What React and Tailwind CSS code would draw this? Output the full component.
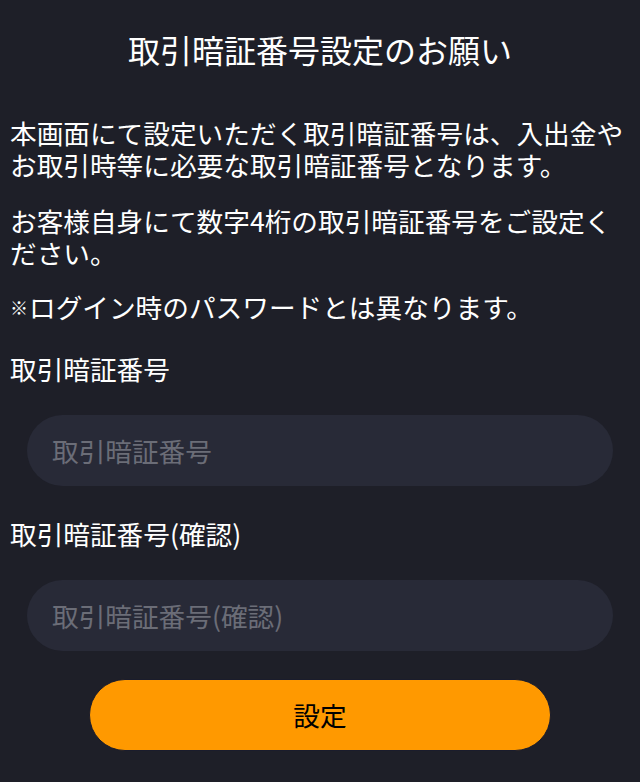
import React, { useState } from "react";

const font = {
  fontFamily: '"Noto Sans CJK JP", "Noto Sans", sans-serif',
};

const PinSettings = () => {
  const [pin, setPin] = useState("");
  const [confirm, setConfirm] = useState("");

  return (
    <div
      className="min-h-screen bg-[#1e1f28] px-[10px] pt-[29px] text-white"
      style={font}
    >
      {/* Title */}
      <h1 className="text-center text-[32px] leading-[40px]">
        取引暗証番号設定のお願い
      </h1>

      {/* Description */}
      <p className="mt-[48px] text-[26.67px] leading-[32px]">
        本画面にて設定いただく取引暗証番号は、入出金やお取引時等に必要な取引暗証番号となります。
      </p>
      <p className="mt-[24px] text-[26.67px] leading-[32px]">
        お客様自身にて数字4桁の取引暗証番号をご設定ください。
      </p>
      <p className="mt-[22px] text-[26.67px] leading-[32px]">
        <span className="mr-[1px] inline-block align-top text-[18px] leading-[32px]">
          ※
        </span>
        ログイン時のパスワードとは異なります。
      </p>

      {/* Fields */}
      <Field
        label="取引暗証番号"
        value={pin}
        onChange={setPin}
        className="mt-[30px]"
      />
      <Field
        label="取引暗証番号(確認)"
        value={confirm}
        onChange={setConfirm}
        className="mt-[32px]"
      />

      {/* Submit */}
      <div className="mt-[28px] flex justify-center">
        <button className="h-[72px] w-[462px] rounded-full border border-[#1a1c2c] bg-[#ff9900] text-[26.67px] text-black">
          設定
        </button>
      </div>
    </div>
  );
};

/* ---------- Components ---------- */

function Field({ label, value, onChange, className }) {
  return (
    <div className={className}>
      <p className="text-[26.67px] leading-[32px]">{label}</p>
      <input
        type="password"
        inputMode="numeric"
        maxLength={4}
        placeholder={label}
        value={value}
        onChange={(e) => onChange(e.target.value)}
        className="mx-[17px] mt-[30px] block h-[71px] w-[586px] rounded-full bg-[#282a37] px-[25px] text-[26.67px] text-white outline-none placeholder:text-[#6b6d77]"
        style={font}
      />
    </div>
  );
}

export default PinSettings;
